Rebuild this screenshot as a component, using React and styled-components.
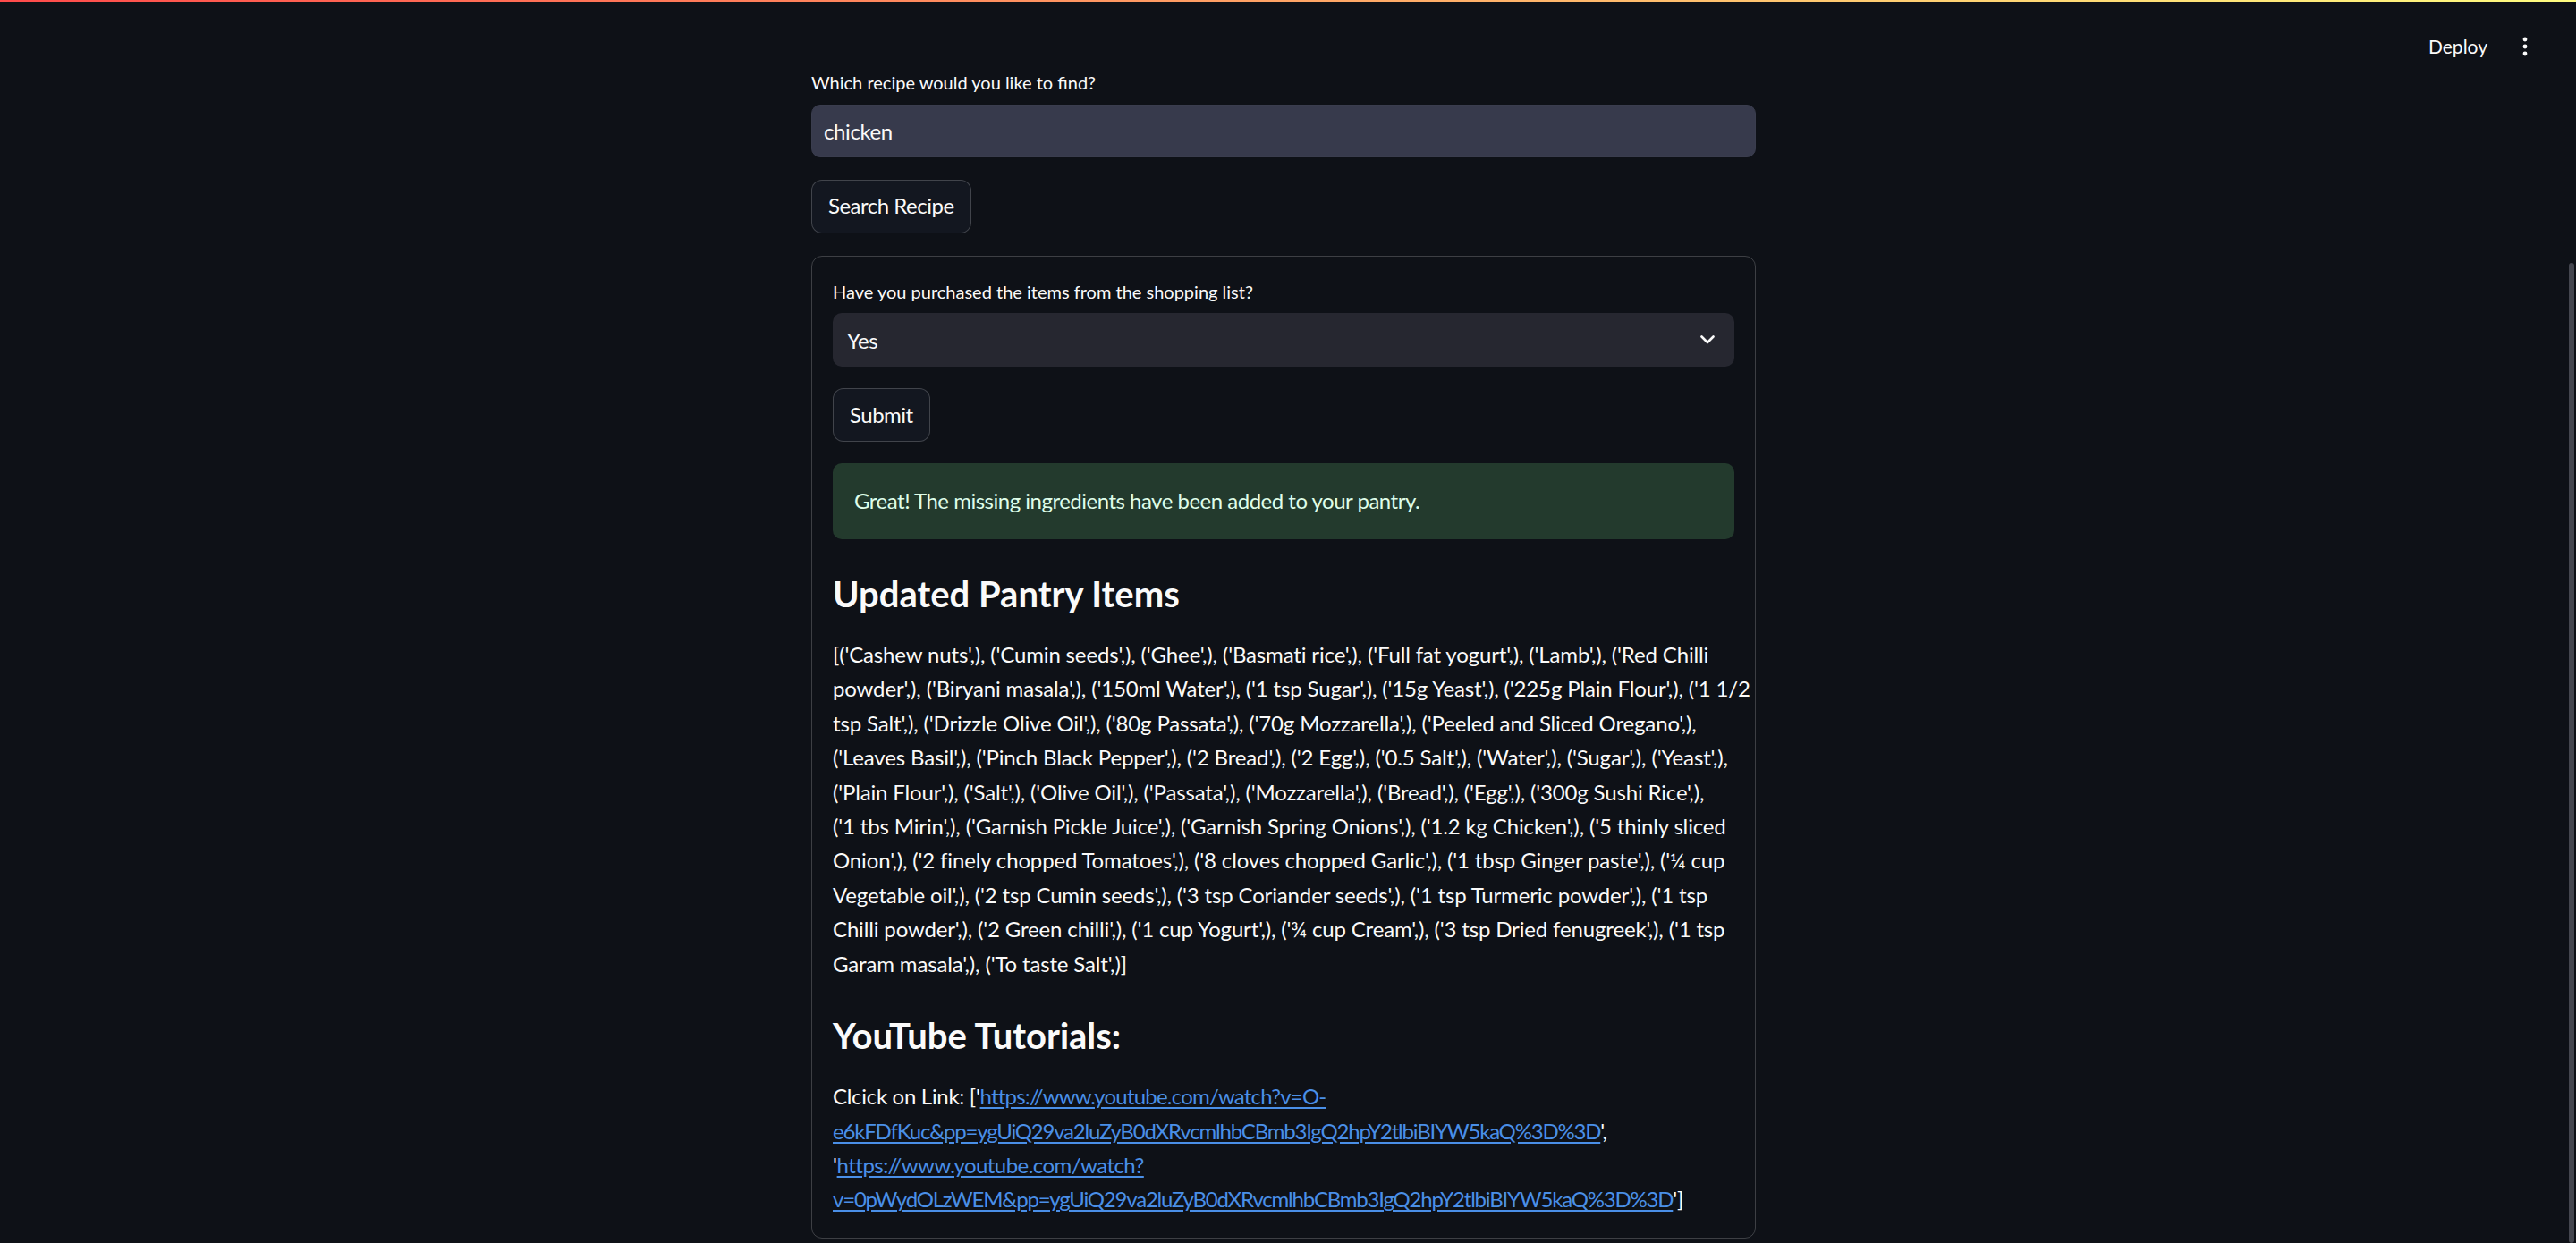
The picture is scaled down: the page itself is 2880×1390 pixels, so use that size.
import React from "react";
import styled, { createGlobalStyle } from "styled-components";

const FONT = `"Lato", "Liberation Sans", sans-serif`;

const GlobalStyle = createGlobalStyle`
  html, body {
    margin: 0;
    padding: 0;
    background: #0e1117;
    overflow: hidden;
  }
  body {
    font-family: ${FONT};
    color: #fafafa;
    -webkit-font-smoothing: antialiased;
  }
`;

const Shell = styled.div`
  position: relative;
  display: flex;
  height: 1390px;
  background: #0e1117;
`;

const Decoration = styled.div`
  position: absolute;
  top: 0;
  left: 0;
  right: 0;
  height: 2px;
  background: linear-gradient(90deg, #ff4b4b, #fffd80);
  z-index: 3;
`;

const Header = styled.header`
  position: absolute;
  top: 0;
  left: 0;
  right: 0;
  height: 104px;
  display: flex;
  align-items: center;
  justify-content: flex-end;
  gap: 12px;
  padding-right: 39px;
  box-sizing: border-box;
  z-index: 2;
  pointer-events: none;
`;

const DeployButton = styled.button`
  background: transparent;
  border: none;
  color: #fafafa;
  font-family: ${FONT};
  font-size: 21px;
  padding: 6px 12px;
  line-height: 1.6;
`;

const KebabButton = styled.button`
  width: 36px;
  height: 36px;
  display: flex;
  align-items: center;
  justify-content: center;
  background: transparent;
  border: none;
  padding: 0;
  color: #fafafa;
`;

const Main = styled.main`
  flex: 1;
  display: flex;
  justify-content: center;
  padding-top: 76px;
`;

const Column = styled.div`
  width: 1056px;
  display: flex;
  flex-direction: column;
  gap: 25px;
`;

const Field = styled.div`
  display: flex;
  flex-direction: column;
  gap: 7px;
`;

const Label = styled.label`
  font-size: 20px;
  line-height: 33.6px;
  letter-spacing: 0;
  color: #fafafa;
`;

const TextInput = styled.input`
  height: 59px;
  box-sizing: border-box;
  border: 1px solid #3a3d4e;
  border-radius: 10px;
  background: #373a4c;
  color: #fafafa;
  font-family: ${FONT};
  font-size: 24px;
  letter-spacing: -0.4px;
  padding: 0 13px;
  outline: none;
`;

const Button = styled.button`
  align-self: flex-start;
  min-height: 60px;
  box-sizing: border-box;
  padding: 0 18px;
  border: 1px solid rgba(250, 250, 250, 0.2);
  border-radius: 12px;
  background: #131720;
  color: #fafafa;
  font-family: ${FONT};
  font-size: 24px;
  letter-spacing: -0.5px;
  line-height: 1.6;
`;

const Bordered = styled.section`
  border: 1px solid rgba(250, 250, 250, 0.2);
  border-radius: 12px;
  padding: 23px;
  display: flex;
  flex-direction: column;
  gap: 24px;
`;

const Select = styled.div`
  height: 60px;
  box-sizing: border-box;
  border-radius: 10px;
  background: #262730;
  display: flex;
  align-items: center;
  justify-content: space-between;
  padding: 0 22px 0 16px;
  font-size: 24px;
  letter-spacing: -0.4px;
`;

const Alert = styled.div`
  border-radius: 10px;
  background: #233a2d;
  color: #dffde9;
  padding: 23px 24px;
  font-size: 24px;
  line-height: 1.6;
  letter-spacing: -0.5px;
`;

const Heading = styled.h3`
  margin: 0;
  padding: 12px 0 0;
  font-size: 40px;
  font-weight: 700;
  line-height: 50.4px;
  letter-spacing: 0;
  color: #fafafa;
`;

const Para = styled.p`
  margin: 0;
  font-size: 24px;
  line-height: 1.6;
  color: #fafafa;
  letter-spacing: ${(p) => p.$tracking || "0"};
`;

const Line = styled.span`
  display: block;
  white-space: nowrap;
`;

const Link = styled.a`
  color: #4a8fe7;
  text-decoration: underline;
  text-underline-offset: 3px;
  letter-spacing: ${(p) => p.$tracking || "-1.2px"};
`;

const ScrollTrack = styled.div`
  width: 10px;
  display: flex;
  justify-content: center;
  padding-top: 294px;
`;

const Thumb = styled.div`
  width: 6px;
  border-radius: 3px;
  background: #44464f;
`;

const pantryLines = [
  "[('Cashew nuts',), ('Cumin seeds',), ('Ghee',), ('Basmati rice',), ('Full fat yogurt',), ('Lamb',), ('Red Chilli",
  "powder',), ('Biryani masala',), ('150ml Water',), ('1 tsp Sugar',), ('15g Yeast',), ('225g Plain Flour',), ('1 1/2",
  "tsp Salt',), ('Drizzle Olive Oil',), ('80g Passata',), ('70g Mozzarella',), ('Peeled and Sliced Oregano',),",
  "('Leaves Basil',), ('Pinch Black Pepper',), ('2 Bread',), ('2 Egg',), ('0.5 Salt',), ('Water',), ('Sugar',), ('Yeast',),",
  "('Plain Flour',), ('Salt',), ('Olive Oil',), ('Passata',), ('Mozzarella',), ('Bread',), ('Egg',), ('300g Sushi Rice',),",
  "('1 tbs Mirin',), ('Garnish Pickle Juice',), ('Garnish Spring Onions',), ('1.2 kg Chicken',), ('5 thinly sliced",
  "Onion',), ('2 finely chopped Tomatoes',), ('8 cloves chopped Garlic',), ('1 tbsp Ginger paste',), ('¼ cup",
  "Vegetable oil',), ('2 tsp Cumin seeds',), ('3 tsp Coriander seeds',), ('1 tsp Turmeric powder',), ('1 tsp",
  "Chilli powder',), ('2 Green chilli',), ('1 cup Yogurt',), ('¾ cup Cream',), ('3 tsp Dried fenugreek',), ('1 tsp",
  "Garam masala',), ('To taste Salt',)]",
];

const URL1 =
  "https://www.youtube.com/watch?v=O-e6kFDfKuc&pp=ygUiQ29va2luZyB0dXRvcmlhbCBmb3IgQ2hpY2tlbiBIYW5kaQ%3D%3D";
const URL2 =
  "https://www.youtube.com/watch?v=0pWydOLzWEM&pp=ygUiQ29va2luZyB0dXRvcmlhbCBmb3IgQ2hpY2tlbiBIYW5kaQ%3D%3D";

const Chevron = () => (
  <svg width="16" height="10" viewBox="0 0 16 10" fill="none">
    <polyline points="1.5,1.5 8,8 14.5,1.5" stroke="#fafafa" strokeWidth="2.6" strokeLinecap="round" strokeLinejoin="round" />
  </svg>
);

const Kebab = () => (
  <svg width="6" height="22" viewBox="0 0 6 22">
    <circle cx="3" cy="3" r="2.4" fill="#fafafa" />
    <circle cx="3" cy="11" r="2.4" fill="#fafafa" />
    <circle cx="3" cy="19" r="2.4" fill="#fafafa" />
  </svg>
);

export default function App() {
  return (
    <>
      <GlobalStyle />
      <Shell>
        <Decoration />
        <Header>
          <DeployButton>Deploy</DeployButton>
          <KebabButton aria-label="Main menu">
            <Kebab />
          </KebabButton>
        </Header>
        <Main>
          <Column>
            <Field>
              <Label>Which recipe would you like to find?</Label>
              <TextInput defaultValue="chicken" />
            </Field>
            <Button>Search Recipe</Button>
            <Bordered>
              <Field>
                <Label>Have you purchased the items from the shopping list?</Label>
                <Select>
                  <span>Yes</span>
                  <Chevron />
                </Select>
              </Field>
              <Button>Submit</Button>
              <Alert>Great! The missing ingredients have been added to your pantry.</Alert>
              <Heading>Updated Pantry Items</Heading>
              <Para $tracking="-0.15px">
                {pantryLines.map((l, i) => (
                  <Line key={i}>{l}</Line>
                ))}
              </Para>
              <Heading>YouTube Tutorials:</Heading>
              <Para $tracking="-0.3px">
                <Line>
                  Clcick on Link: ['<Link href={URL1} $tracking="-0.8px">https://www.youtube.com/watch?v=O-</Link>
                </Line>
                <Line>
                  <Link href={URL1}>e6kFDfKuc&amp;pp=ygUiQ29va2luZyB0dXRvcmlhbCBmb3IgQ2hpY2tlbiBIYW5kaQ%3D%3D</Link>',
                </Line>
                <Line>
                  '<Link href={URL2} $tracking="-0.55px">https://www.youtube.com/watch?</Link>
                </Line>
                <Line>
                  <Link href={URL2}>v=0pWydOLzWEM&amp;pp=ygUiQ29va2luZyB0dXRvcmlhbCBmb3IgQ2hpY2tlbiBIYW5kaQ%3D%3D</Link>']
                </Line>
              </Para>
            </Bordered>
          </Column>
        </Main>
        <ScrollTrack>
          <Thumb />
        </ScrollTrack>
      </Shell>
    </>
  );
}
